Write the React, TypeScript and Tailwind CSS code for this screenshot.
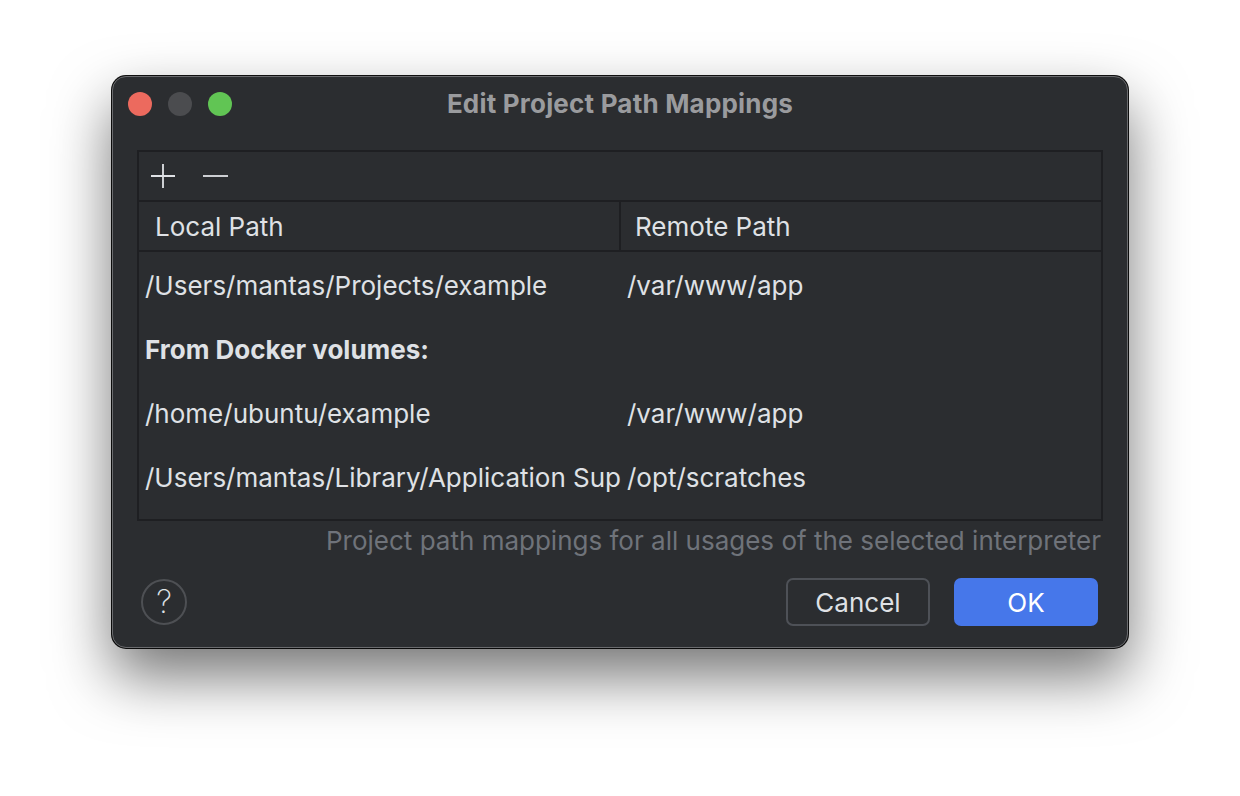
const font = { fontFamily: 'Inter, "Noto Sans", sans-serif' }

function TrafficLights() {
  return (
    <div className="flex items-center gap-4">
      <div className="h-6 w-6 rounded-full bg-[#ec6a5e]" />
      <div className="h-6 w-6 rounded-full bg-[#4b4c4f]" />
      <div className="h-6 w-6 rounded-full bg-[#61c554]" />
    </div>
  )
}

function PlusIcon() {
  return (
    <svg width="26" height="26" viewBox="0 0 26 26" fill="none">
      <path d="M13 1v24M1 13h24" stroke="#dfe1e5" strokeWidth="1.8" />
    </svg>
  )
}

function MinusIcon() {
  return (
    <svg width="26" height="26" viewBox="0 0 26 26" fill="none">
      <path d="M1 13h25" stroke="#dfe1e5" strokeWidth="1.8" />
    </svg>
  )
}

const rows = [
  { local: '/Users/mantas/Projects/example', remote: '/var/www/app' },
  { heading: 'From Docker volumes:' },
  { local: '/home/ubuntu/example', remote: '/var/www/app' },
  { local: '/Users/mantas/Library/Application Sup', remote: '/opt/scratches' },
]

export default function App() {
  return (
    <div className="h-[796px] w-[1240px] bg-white pl-[112px] pt-[76px]" style={font}>
      <div className="flex h-[572px] w-[1016px] flex-col rounded-[14px] border border-[#6a6b6e] bg-[#2b2d30] shadow-[0_28px_60px_rgba(0,0,0,0.55),0_0_0_1px_#111]">
        <div className="relative flex h-[53px] items-center px-[15px]">
          <TrafficLights />
          <div className="absolute inset-0 flex items-center justify-center text-[26px] font-bold tracking-[0.2px] text-[#9a9b9e]">
            Edit Project Path Mappings
          </div>
        </div>

        <div className="mx-[24px] mt-[20px] flex h-[371px] flex-col border-2 border-[#1e1f22]">
          <div className="flex h-[50px] shrink-0 items-center gap-[26px] border-b-2 border-[#1e1f22] pl-[11px]">
            <PlusIcon />
            <MinusIcon />
          </div>
          <div className="flex h-[50px] shrink-0 items-center border-b-2 border-[#1e1f22] text-[26px] text-[#dfe1e5]">
            <div className="flex h-full w-[482px] items-center border-r-2 border-[#1e1f22] pl-[16px]">
              Local Path
            </div>
            <div className="pl-[14px]">Remote Path</div>
          </div>
          <div className="flex flex-col pt-[1px] text-[26px] text-[#dfe1e5]">
            {rows.map((row, i) =>
              row.heading ? (
                <div key={i} className="flex h-[64px] items-center pl-[6px] font-bold">
                  {row.heading}
                </div>
              ) : (
                <div key={i} className="flex h-[64px] items-center">
                  <div className="w-[482px] overflow-hidden whitespace-nowrap pl-[6px]">{row.local}</div>
                  <div className="pl-[6px]">{row.remote}</div>
                </div>
              )
            )}
          </div>
        </div>

        <div className="mx-[24px] mt-[4px] flex h-[30px] items-center justify-end pr-[2px] text-[26px] text-[#6f737a]">
          Project path mappings for all usages of the selected interpreter
        </div>

        <div className="mt-auto mb-[21px] flex items-center pl-[28px] pr-[29px]">
          <div className="flex h-[46px] w-[46px] items-center justify-center rounded-full border-2 border-[#4e5054] text-[32px] font-extralight text-[#dfe1e5]">
            ?
          </div>
          <div className="ml-auto flex gap-[24px]">
            <button className="h-[48px] w-[144px] rounded-[7px] border-2 border-[#4e5157] text-[26px] text-[#dfe1e5]">
              Cancel
            </button>
            <button className="h-[48px] w-[144px] rounded-[7px] bg-[#4677ea] text-[26px] text-white">
              OK
            </button>
          </div>
        </div>
      </div>
    </div>
  )
}
